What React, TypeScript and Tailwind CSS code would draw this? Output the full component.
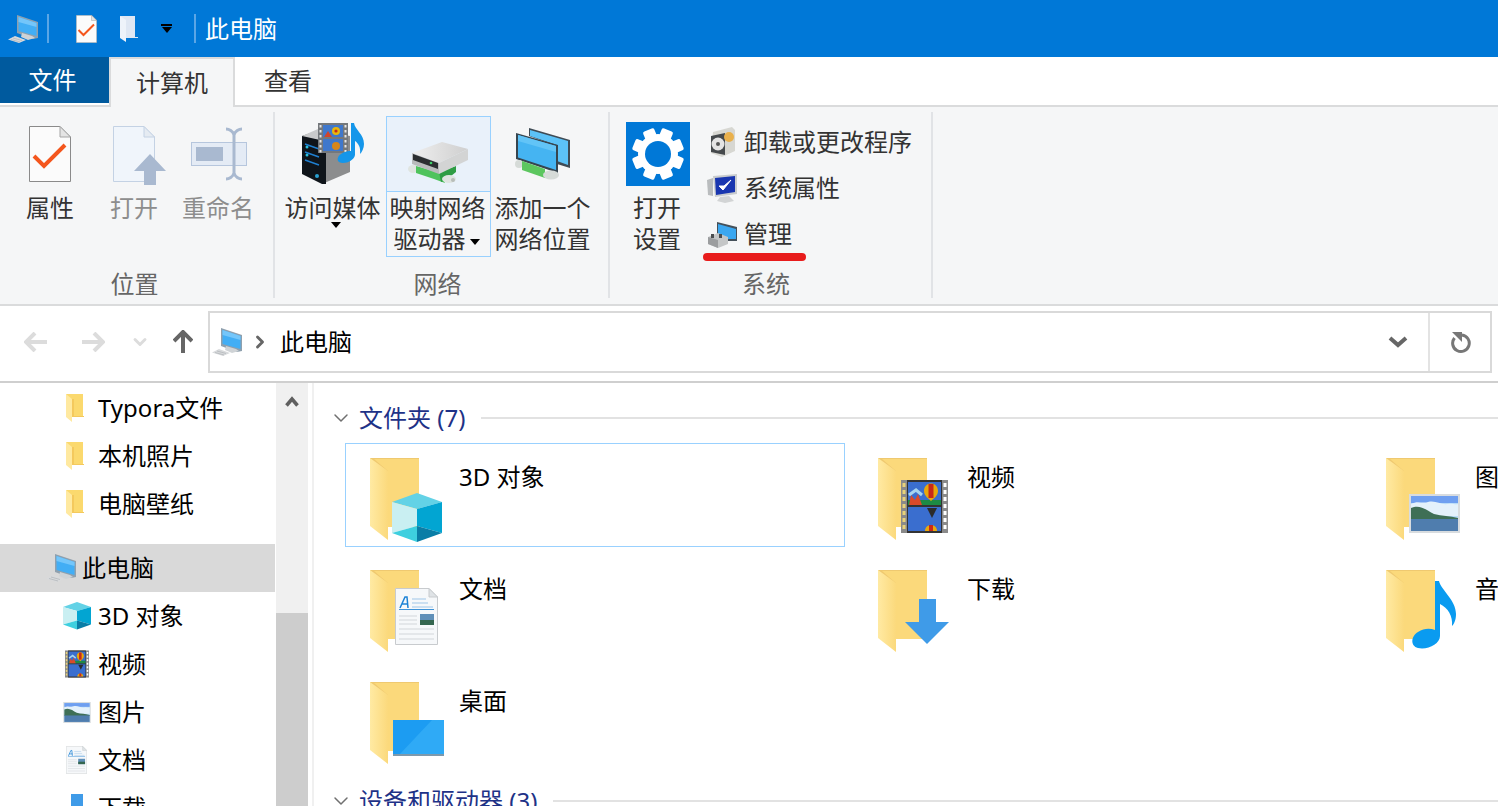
import type { ReactNode } from 'react';
import { ChevronDown, ChevronRight } from 'lucide-react';

// --- Icons ---

function PcIcon({ className }: { className?: string }) {
  return (
    <svg viewBox="0 0 30 28" className={className}>
      <path d="M9 0 L30 7 V23 L25 24 L9 18 Z" fill="#8fa0ae" />
      <path d="M10.5 2 L28.5 8 V21 L10.5 16 Z" fill="#42aef5" />
      <path d="M10.5 2 L28.5 8 V12 L10.5 7 Z" fill="#74c6fa" />
      <path d="M14 18 L24 21 L27 23 L20 25 L13 22 Z" fill="#cfd3d6" />
      <path d="M7 21 L18 25 L11 28 L0 24.5 Z" fill="#d8dadc" />
      <path d="M5 23 L14 25.5 M3 24.5 L12 27" stroke="#b4b8bb" strokeWidth="0.8" />
    </svg>
  );
}

function TinyFolder({ className }: { className?: string }) {
  return (
    <svg viewBox="0 0 18 28" className={className}>
      <path d="M0 0 H17 V23 H6 Z" fill="#fbd96e" />
      <path d="M0 0 L6 5 V28 L0 23 Z" fill="#ffe9a0" />
      <path d="M6 5 V23 H18 V22 H8 V5 Z" fill="#f4c95d" />
    </svg>
  );
}

function DocCheck({ className }: { className?: string }) {
  return (
    <svg viewBox="0 0 42 56" className={className}>
      <path d="M.5 .5 H31 L41.5 11 V55.5 H.5 Z" fill="#fbfbfb" stroke="#8a8a8a" />
      <path d="M31 .5 V11 H41.5 Z" fill="#e4e4e4" stroke="#a5a5a5" />
      <path d="M5 30 L15 40 L36 19" fill="none" stroke="#f4561d" strokeWidth="4" />
    </svg>
  );
}

function OpenIcon({ className }: { className?: string }) {
  return (
    <svg viewBox="0 0 54 59" className={className}>
      <path d="M.5 .5 H31 L41.5 11 V55.5 H.5 Z" fill="#f0f5fb" stroke="#c4d2e4" />
      <path d="M31 .5 V11 H41.5 Z" fill="#e5ebf2" stroke="#c4d2e4" />
      <path d="M37 28 L53 45 H43 V59 H31 V45 H21 Z" fill="#a9b9d0" />
    </svg>
  );
}

function RenameIcon({ className }: { className?: string }) {
  return (
    <svg viewBox="0 0 56 54" className={className}>
      <rect x=".5" y="15.5" width="55" height="23" fill="#e4ebf5" stroke="#b6c6dd" />
      <rect x="5" y="20" width="27" height="14" fill="#a9b9d0" />
      <path d="M35 2 C38 2 42 4 43 8 V46 C42 50 38 52 35 52 M51 2 C48 2 44 4 43 8 M51 52 C48 52 44 50 43 46" fill="none" stroke="#a9b9d0" strokeWidth="3" />
    </svg>
  );
}

function MediaIcon({ className }: { className?: string }) {
  return (
    <svg viewBox="0 0 62 62" className={className}>
      <path d="M18 8 L48 14 V50 L20 62 Z" fill="#8c8d8e" />
      <path d="M0 14 L18 8 L24 16 V62 L20 62 L0 52 Z" fill="#0f141a" />
      <path d="M0 14 L16 7 L18 18 Z" fill="#c9cacb" />
      <path d="M3 22 L17 27 M3 30 L17 35 M3 38 L17 43" stroke="#1f7fd0" strokeWidth="1.5" />
      <circle cx="5" cy="25" r="1.5" fill="#2ac0e0" />
      <circle cx="5" cy="33" r="1.5" fill="#2ac0e0" />
      <circle cx="15" cy="54" r="2" fill="#2aa0d0" />
      <rect x="16" y="1" width="30" height="30" fill="#74787c" />
      <rect x="21" y="3" width="20" height="12" fill="#3f78cc" />
      <rect x="21" y="17" width="20" height="12" fill="#3f78cc" />
      <circle cx="34" cy="9" r="4" fill="#e8b60c" />
      <circle cx="34" cy="9" r="1.6" fill="#c8281a" />
      <circle cx="34" cy="24" r="4" fill="#d8861a" />
      <path d="M22 15 L26 9 L30 15 Z" fill="#d2452a" />
      {[3, 8, 13, 18, 23, 28].map((y) => (
        <g key={y}>
          <rect x="17.5" y={y} width="2" height="2.5" fill="#e6e6e6" />
          <rect x="42.5" y={y} width="2" height="2.5" fill="#e6e6e6" />
        </g>
      ))}
      <path d="M49 1 L52 1 C53 8 62 12 62 22 C62 26 60 30 58 32 C59 25 56 21 53 19 V33 C52 39 42 43 37 40 C33 36 39 29 49 29 Z" fill="#1496ea" />
    </svg>
  );
}

function DriveIcon({ className }: { className?: string }) {
  return (
    <svg viewBox="0 0 60 42" className={className}>
      <defs>
        <linearGradient id="drvTop" x1="0" x2="1" y1="0" y2="0">
          <stop offset="0" stopColor="#efefef" />
          <stop offset="1" stopColor="#cfcfcf" />
        </linearGradient>
      </defs>
      <ellipse cx="5" cy="27" rx="5" ry="4" fill="#dfe4e0" />
      <path d="M8 24 L33 31 L37 41 L26 37 L8 31 Z" fill="#4fc35c" />
      <path d="M31 30 L48 24 V30 L38 38 L33 40 Z" fill="#2f9d45" />
      <ellipse cx="41" cy="37" rx="7" ry="4" fill="#dfe4e0" />
      <circle cx="45" cy="38" r="2" fill="#b8bdb9" />
      <path d="M4 11 L34 0 L60 7 L31 21 Z" fill="url(#drvTop)" />
      <path d="M4 11 L31 21 V32 L4 22 Z" fill="#b9babb" />
      <path d="M5 12 L30 21 V27 L5 18 Z" fill="#2b2e30" />
      <path d="M31 21 L60 7 V18 L31 32 Z" fill="#d3d4d4" />
      <circle cx="23" cy="21" r="1.3" fill="#3fd06a" />
    </svg>
  );
}

function NetIcon({ className }: { className?: string }) {
  return (
    <svg viewBox="0 0 55 52" className={className}>
      <path d="M14 0 L55 12 V40 L42 36 V18 L14 8 Z" fill="#3f4b55" />
      <path d="M15 2 L53 13 V37 L42 33 V17 L15 8 Z" fill="#5cc2f7" />
      <path d="M1 5 L43 17 V45 L1 31 Z" fill="#37454f" />
      <path d="M3 7 L41 18 V42 L3 29.5 Z" fill="#45b4f2" />
      <path d="M3 7 L41 18 V24 L3 13 Z" fill="#62c4f7" />
      <ellipse cx="4" cy="36" rx="4" ry="4" fill="#d6dbd8" />
      <path d="M7 33 L30 41 V50 L7 42 Z" fill="#5cc65f" />
      <ellipse cx="36" cy="47" rx="8" ry="4.5" fill="#d6dbd8" />
    </svg>
  );
}

function GearTile() {
  return (
    <div className="w-[64px] h-[64px] bg-[#0078d7] flex items-center justify-center">
      <svg viewBox="0 0 64 64" className="w-[64px] h-[64px]">
        <g fill="#ffffff">
          <circle cx="32" cy="32" r="20" />
          {[0, 45, 90, 135, 180, 225, 270, 315].map((a) => (
            <rect key={a} x="26" y="6" width="12" height="14" rx="2" transform={`rotate(${a + 22.5} 32 32)`} />
          ))}
        </g>
        <circle cx="32" cy="32" r="13" fill="#0078d7" />
      </svg>
    </div>
  );
}

function UninstallIcon({ className }: { className?: string }) {
  return (
    <svg viewBox="0 0 28 30" className={className}>
      <path d="M5 5 L24 0 L27 3 V24 L14 30 L3 26 Z" fill="#d7d7d2" />
      <path d="M3 9 L17 6 V28 L3 25 Z" fill="#45494c" />
      <circle cx="10" cy="17" r="6.5" fill="#e4e4e4" />
      <circle cx="10" cy="17" r="2" fill="#555" />
      <circle cx="21" cy="10" r="5" fill="#e9b04c" />
    </svg>
  );
}

function SysPropsIcon({ className }: { className?: string }) {
  return (
    <svg viewBox="0 0 30 29" className={className}>
      <path d="M0 6 L6 4 V22 L1 21 Z" fill="#b9bcbe" />
      <path d="M6 2 L30 0 V20 L8 23 Z" fill="#c9ccce" />
      <path d="M8 4 L28 2 V18 L9 21 Z" fill="#1936b0" />
      <path d="M12 12 L16 16 L24 6 L17 12 Z" fill="#ffffff" stroke="#ffffff" />
      <path d="M13 23 L22 22 L27 27 L18 29 L10 27 Z" fill="#d2d4d5" />
    </svg>
  );
}

function ManageIcon({ className }: { className?: string }) {
  return (
    <svg viewBox="0 0 29 27" className={className}>
      <path d="M9 1 L29 6 V20 L9 20 Z" fill="#45505a" />
      <path d="M10 3 L28 8 V18 L10 18 Z" fill="#3ba7f0" />
      <path d="M0 16 L10 12 L20 16 V23 L10 27 L0 23 Z" fill="#c4c6c7" />
      <path d="M0 16 L10 19 V27 L0 23 Z" fill="#9b9d9f" />
      <rect x="3" y="13" width="3" height="4" fill="#4b4d4f" />
      <rect x="11" y="13" width="3" height="4" fill="#4b4d4f" />
    </svg>
  );
}

// Big folder with a little picture on top of it, 90x90 box
function FolderIcon({ children }: { children?: ReactNode }) {
  return (
    <svg viewBox="0 0 90 90" className="w-[90px] h-[90px] shrink-0 mt-[14px]">
      <defs>
        <linearGradient id="flap" x1="0" x2="1" y1="0" y2="0">
          <stop offset="0" stopColor="#ffeaa3" />
          <stop offset="1" stopColor="#fbd97c" />
        </linearGradient>
      </defs>
      <path d="M0 0 H49 V69 H18 Z" fill="#fbd97b" />
      <path d="M0 0 H49 V1 H4 L18 13 V69 H16 Z" fill="#efc970" />
      <path d="M0 0 L18 13 V82 L0 68 Z" fill="url(#flap)" />
      {children}
    </svg>
  );
}

function Cube() {
  return (
    <g>
      <path d="M47 35 L72 44 L47 51 L22 44 Z" fill="#63d2e6" />
      <path d="M22 44 L47 51 V68 L22 75 Z" fill="#c9eff2" />
      <path d="M47 51 L72 44 V75 L47 68 Z" fill="#02a5d2" />
      <path d="M22 75 L47 68 V84 Z" fill="#3ecfdf" />
      <path d="M47 68 L72 75 L47 84 Z" fill="#0a7da6" />
    </g>
  );
}

function Balloon({ cx, cy }: { cx: number; cy: number }) {
  return (
    <g>
      <path d={`M${cx - 7} ${cy} C${cx - 7} ${cy - 10} ${cx + 7} ${cy - 10} ${cx + 7} ${cy} C${cx + 7} ${cy + 5} ${cx + 2} ${cy + 8} ${cx} ${cy + 10} C${cx - 2} ${cy + 8} ${cx - 7} ${cy + 5} ${cx - 7} ${cy} Z`} fill="#e8a80c" />
      <path d={`M${cx - 2.5} ${cy - 7} H${cx + 2.5} V${cy + 7} H${cx - 2.5} Z`} fill="#c8281a" />
    </g>
  );
}

function Filmstrip() {
  return (
    <g>
      <rect x="23" y="22" width="47" height="53" fill="#8a8a8a" />
      <rect x="29" y="22" width="35" height="53" fill="#333" />
      <rect x="30" y="24" width="33" height="23" fill="#3a6ecf" />
      <rect x="30" y="49" width="33" height="24" fill="#3a6ecf" />
      <rect x="30" y="42" width="33" height="5" fill="#1d8a44" />
      <path d="M31 47 L33 37 L37 42 L40 36 L44 47 Z" fill="#d94a2a" />
      <path d="M31 37 L38 32 L44 37" fill="none" stroke="#a6d4ef" strokeWidth="3" />
      <Balloon cx={53} cy={33} />
      <path d="M49 50 H59 L54 60 Z" fill="#2b2b2b" />
      <path d="M47 73 C47 65 59 65 59 73 Z" fill="#e8a80c" />
      <path d="M51 73 V67 H55 V73 Z" fill="#c8281a" />
      {[25, 32, 39, 46, 53, 60, 67].map((y) => (
        <g key={y}>
          <rect x="24.5" y={y} width="3" height="4" fill="#e8d27a" />
          <rect x="65.5" y={y} width="3" height="4" fill="#ffffff" />
        </g>
      ))}
    </g>
  );
}

function Photo() {
  return (
    <g>
      <rect x="23" y="36" width="51" height="39" fill="#d8dcdf" />
      <rect x="25" y="38" width="47" height="35" fill="#b9dcf8" />
      <rect x="25" y="38" width="47" height="7" fill="#6f9ff0" />
      <path d="M25 46 C32 42 36 46 42 44 C50 42 54 47 62 46 C66 45 70 47 72 46 V58 H25 Z" fill="#e4f1fb" />
      <path d="M25 50 C34 46 40 52 48 56 C56 58 64 58 72 60 V62 H25 Z" fill="#3f6f56" />
      <rect x="25" y="61" width="47" height="12" fill="#4f7dae" />
    </g>
  );
}

function DocPic() {
  return (
    <g>
      <path d="M25.5 18.5 H59 L67.5 27 V74.5 H25.5 Z" fill="#f6f8fa" stroke="#c8cbce" />
      <path d="M59 18.5 V27 H67.5 Z" fill="#dfe3e6" stroke="#c8cbce" />
      <path d="M30 38 L35 27 H37 L38 38 M32 34 H38" fill="none" stroke="#1c82d6" strokeWidth="1.5" />
      <path d="M42 29 H56 M42 33 H58 M42 37 H63" stroke="#9fc6e8" strokeWidth="1" />
      <rect x="29" y="39" width="35" height="1" fill="#3f93d8" />
      <path d="M29 46 H47 M29 50 H47 M29 54 H47 M29 59 H64 M29 64 H64 M29 69 H64" stroke="#d2d6da" strokeWidth="1" />
      <rect x="50" y="44" width="14" height="11" fill="#5f8fb8" />
      <rect x="50" y="50" width="14" height="5" fill="#34664f" />
    </g>
  );
}

function DesktopPic() {
  return (
    <g>
      <rect x="23" y="38" width="51" height="36" fill="#1c9cf2" />
      <path d="M30 72 L62 38 H74 V72 Z" fill="#2faaf6" />
      <rect x="23" y="72" width="51" height="2" fill="#7d99ac" />
    </g>
  );
}

function ArrowPic() {
  return <path d="M41 29 H58 V52 H71 L49 74 L27 52 H41 Z" fill="#3f9be8" />;
}

function NotePic() {
  return (
    <path
      d="M49 11 L53 11 C55 20 70 30 70 44 C70 50 68 54 66 56 C67 46 62 38 54 34 V66 C54 74 42 80 32 78 C24 76 25 66 32 62 C38 58 44 58 49 60 Z"
      fill="#0a9bf0"
    />
  );
}

// Thin arrows in the navigation row
function NavArrow({ dir, color }: { dir: 'left' | 'right' | 'up'; color: string }) {
  const rot = dir === 'left' ? 'rotate-0' : dir === 'right' ? 'rotate-180' : 'rotate-90';
  return (
    <svg viewBox="0 0 24 20" className={`w-[24px] h-[20px] ${rot}`}>
      <path d="M11 1 L2 10 L11 19 M2 10 H23" fill="none" stroke={color} strokeWidth="4" />
    </svg>
  );
}

// --- Ribbon pieces ---

function BigButton({ icon, label, w, disabled }: { icon: ReactNode; label: ReactNode; w: string; disabled?: boolean }) {
  return (
    <div className={`${w} flex flex-col items-center shrink-0`}>
      <div className="h-[76px] w-full flex flex-col items-center">{icon}</div>
      <div className={`leading-[31px] text-center whitespace-nowrap ${disabled ? 'text-[#8d8d8d]' : 'text-[#333333]'}`}>{label}</div>
    </div>
  );
}

function Caret() {
  return <span className="inline-block w-0 h-0 border-x-[5px] border-x-transparent border-t-[6px] border-t-black align-middle" />;
}

function SmallRow({ icon, label }: { icon: ReactNode; label: string }) {
  return (
    <div className="h-[46px] flex items-center">
      <div className="w-[36px] shrink-0">{icon}</div>
      <span className="text-[#333333] whitespace-nowrap">{label}</span>
    </div>
  );
}

function Group({ label, className, labelClass, children }: { label: string; className: string; labelClass: string; children: ReactNode }) {
  return (
    <div className={`relative h-[186px] flex flex-col border-r-2 border-[#e1e3e6] shrink-0 ${className}`}>
      <div className="flex-1 flex items-start">{children}</div>
      <div className={`text-center text-[#666666] leading-[32px] -mb-[2px] ${labelClass}`}>{label}</div>
    </div>
  );
}

function Ribbon() {
  return (
    <div className="h-[199px] bg-[#f5f6f7] border-b-2 border-[#dadbdc] pt-[5px] flex shrink-0">
      <Group label="位置" className="w-[275px] pl-[8px]" labelClass="pr-[12px]">
        <div className="flex pt-[4px]">
          <BigButton w="w-[84px]" icon={<DocCheck className="w-[42px] h-[56px] mt-[10px]" />} label="属性" />
          <BigButton w="w-[84px]" disabled icon={<OpenIcon className="w-[54px] h-[59px] mt-[10px] ml-[12px]" />} label="打开" />
          <BigButton w="w-[84px]" disabled icon={<RenameIcon className="w-[56px] h-[54px] mt-[11px] ml-[2px]" />} label="重命名" />
        </div>
      </Group>
      <Group label="网络" className="w-[335px] pl-[9px]" labelClass="pr-[17px]">
        <div className="flex pt-[4px]">
          <BigButton
            w="w-[97px]"
            icon={<MediaIcon className="w-[62px] h-[62px] mt-[6px] ml-[1px]" />}
            label={<div>访问媒体<div className="-mt-[5px] leading-[8px] pl-[6px]"><Caret /></div></div>}
          />
          <div className="w-[105px] h-[141px] ml-[5px] border border-[#99d1ff] bg-[#e9f1fa] shrink-0 flex flex-col">
            <div className="h-[74px] flex flex-col items-center">
              <DriveIcon className="w-[60px] h-[42px] mt-[25px] -ml-[2px]" />
            </div>
            <div className="flex-1 border-t border-[#99d1ff] bg-[#f5f6f7] text-[#333333] text-center leading-[31px] whitespace-nowrap">
              <div className="-ml-[2px]">映射网络</div>
              <div className="-ml-[2px] pr-[2px]">驱动器<span className="ml-[4px]"><Caret /></span></div>
            </div>
          </div>
          <div className="ml-[3px]">
            <BigButton w="w-[97px]" icon={<NetIcon className="w-[55px] h-[52px] mt-[12px]" />} label={<>添加一个<br />网络位置</>} />
          </div>
        </div>
      </Group>
      <Group label="系统" className="w-[323px] pl-[16px]" labelClass="pr-[25px]">
        <div className="flex pt-[10px]">
          <div className="w-[64px] flex flex-col items-center shrink-0">
            <GearTile />
            <div className="mt-[6px] pr-[2px] leading-[31px] text-center text-[#333333]">打开<br />设置</div>
          </div>
          <div className="ml-[18px] -mt-[3px]">
            <SmallRow icon={<UninstallIcon className="w-[28px] h-[30px]" />} label="卸载或更改程序" />
            <SmallRow icon={<SysPropsIcon className="w-[30px] h-[29px] -ml-[1px]" />} label="系统属性" />
            <SmallRow icon={<ManageIcon className="w-[29px] h-[27px]" />} label="管理" />
          </div>
        </div>
        <div className="absolute left-[93px] top-[141px] w-[103px] h-[8px] rounded-full bg-[#e81c1c]" />
      </Group>
    </div>
  );
}

// --- Navigation pane ---

function NavRow({ icon, label, selected, indent = 'pl-[66px]', gap = 'w-[32px]' }: { icon: ReactNode; label: string; selected?: boolean; indent?: string; gap?: string }) {
  return (
    <div className={`h-[48px] flex items-center text-black ${indent} ${selected ? 'bg-[#d9d9d9] w-[275px]' : ''}`}>
      <div className={`${gap} shrink-0 flex`}>{icon}</div>
      <span className="whitespace-nowrap">{label}</span>
    </div>
  );
}

function Sidebar() {
  return (
    <div className="w-[276px] shrink-0 pt-[1px] overflow-hidden">
      <NavRow icon={<TinyFolder className="w-[18px] h-[28px]" />} label="Typora文件" />
      <NavRow icon={<TinyFolder className="w-[18px] h-[28px]" />} label="本机照片" />
      <NavRow icon={<TinyFolder className="w-[18px] h-[28px]" />} label="电脑壁纸" />
      <div className="h-[16px]" />
      <NavRow selected indent="pl-[46px]" gap="w-[36px]" icon={<PcIcon className="w-[30px] h-[28px]" />} label="此电脑" />
      <NavRow indent="pl-[63px]" gap="w-[35px]" icon={<svg viewBox="0 0 50 50" className="w-[28px] h-[28px]"><g transform="translate(-22 -35)"><Cube /></g></svg>} label="3D 对象" />
      <NavRow indent="pl-[65px]" gap="w-[33px]" icon={<svg viewBox="23 22 47 53" className="w-[24px] h-[28px]"><Filmstrip /></svg>} label="视频" />
      <NavRow indent="pl-[63px]" gap="w-[35px]" icon={<svg viewBox="23 36 51 39" className="w-[28px] h-[21px]"><Photo /></svg>} label="图片" />
      <NavRow indent="pl-[66px]" gap="w-[32px]" icon={<svg viewBox="25 18 43 57" className="w-[21px] h-[28px]"><DocPic /></svg>} label="文档" />
      <NavRow indent="pl-[71px]" gap="w-[27px]" icon={<div className="w-[12px] h-[28px] bg-[#3f9be8]" />} label="下载" />
    </div>
  );
}

function Scrollbar() {
  return (
    <div className="w-[32px] shrink-0 bg-[#f0f0f0] flex flex-col">
      <div className="h-[230px] flex justify-center pt-[13px]">
        <svg viewBox="0 0 14 11" className="w-[14px] h-[11px]">
          <path d="M1.5 9.5 L7 3 L12.5 9.5" fill="none" stroke="#5f5f5f" strokeWidth="3.5" />
        </svg>
      </div>
      <div className="flex-1 bg-[#cdcdcd]" />
    </div>
  );
}

// --- Content ---

function Tile({ label, icon, active }: { label: string; icon: ReactNode; active?: boolean }) {
  return (
    <div className={`w-[500px] h-[104px] flex pl-[24px] border ${active ? 'border-[#99d1ff]' : 'border-transparent'}`}>
      {icon}
      <span className="-ml-[1px] mt-[17px] leading-[32px] text-black whitespace-nowrap">{label}</span>
    </div>
  );
}

function SectionHead({ label, lineGap }: { label: string; lineGap: string }) {
  return (
    <div className="h-[32px] flex items-center">
      <ChevronDown className="w-[24px] h-[24px] text-[#707070] shrink-0" strokeWidth={1.5} />
      <span className="ml-[6px] text-[#1e3287] whitespace-nowrap">{label}</span>
      <div className={`flex-1 h-[2px] bg-[#e2e2e2] ${lineGap}`} />
    </div>
  );
}

function Content() {
  return (
    <div className="flex-1 min-w-0 pl-[15px] pt-[19px] overflow-hidden border-l-2 border-[#f0f0f0] ml-[4px]">
      <SectionHead label="文件夹 (7)" lineGap="ml-[16px]" />
      <div className="grid grid-cols-[500px_500px_500px] gap-x-[8px] gap-y-[8px] pl-[16px] mt-[9px]">
        <Tile active label="3D 对象" icon={<FolderIcon><Cube /></FolderIcon>} />
        <Tile label="视频" icon={<FolderIcon><Filmstrip /></FolderIcon>} />
        <Tile label="图片" icon={<FolderIcon><Photo /></FolderIcon>} />
        <Tile label="文档" icon={<FolderIcon><DocPic /></FolderIcon>} />
        <Tile label="下载" icon={<FolderIcon><ArrowPic /></FolderIcon>} />
        <Tile label="音乐" icon={<FolderIcon><NotePic /></FolderIcon>} />
        <Tile label="桌面" icon={<FolderIcon><DesktopPic /></FolderIcon>} />
      </div>
      <div className="mt-[14px]">
        <SectionHead label="设备和驱动器 (3)" lineGap="ml-[16px]" />
      </div>
    </div>
  );
}

export default function App() {
  return (
    <div className="w-[1498px] h-[806px] overflow-hidden flex flex-col bg-white text-[24px] font-['Noto_Sans','Noto_Sans_CJK_SC',sans-serif]">
      {/* Title bar */}
      <div className="h-[57px] bg-[#0078d7] flex items-center shrink-0 pl-[8px]">
        <PcIcon className="w-[30px] h-[28px]" />
        <div className="ml-[9px] w-[2px] h-[29px] bg-[#5ba6e6]" />
        <DocCheck className="ml-[27px] w-[21px] h-[28px]" />
        <svg viewBox="0 0 18 27" className="ml-[23px] w-[18px] h-[27px]">
          <path d="M0 1 H15 V22 H18 V23 H5 Z" fill="#dfe7f3" />
          <path d="M0 1 L6 5 V27 L0 23 Z" fill="#eef3fa" />
        </svg>
        <div className="ml-[23px] flex flex-col items-center">
          <div className="w-[11px] h-[2px] bg-black mb-[1px]" />
          <Caret />
        </div>
        <div className="ml-[22px] w-[2px] h-[29px] bg-[#5ba6e6]" />
        <span className="ml-[9px] text-white">此电脑</span>
      </div>

      {/* Tabs */}
      <div className="h-[50px] flex shrink-0 bg-white border-b-2 border-[#dadbdc] relative">
        <div className="w-[109px] h-[46px] bg-[#005a9e] text-white flex items-center justify-center pr-[4px]">文件</div>
        <div className="w-[126px] h-[50px] bg-[#f5f6f7] border-x-2 border-t-2 border-[#dadbdc] text-[#333333] flex items-center justify-center">计算机</div>
        <div className="w-[106px] flex items-center justify-center text-[#333333]">查看</div>
      </div>

      <Ribbon />

      {/* Address row */}
      <div className="h-[77px] flex items-center shrink-0 border-b-2 border-[#cfcfcf] pl-[24px] pb-[3px]">
        <NavArrow dir="left" color="#dcdcdc" />
        <div className="ml-[33px]"><NavArrow dir="right" color="#dcdcdc" /></div>
        <ChevronDown className="ml-[25px] w-[20px] h-[20px] text-[#dcdcdc]" strokeWidth={3.5} />
        <div className="ml-[21px] w-[24px] flex justify-center"><NavArrow dir="up" color="#666666" /></div>
        <div className="ml-[13px] mr-[6px] flex-1 h-[62px] border-2 border-[#d9d9d9] flex items-center text-black">
          <PcIcon className="ml-[2px] w-[30px] h-[28px]" />
          <ChevronRight className="ml-[8px] w-[20px] h-[20px] text-[#666666]" strokeWidth={3.5} />
          <span className="ml-[10px]">此电脑</span>
          <div className="flex-1" />
          <svg viewBox="0 0 20 12" className="w-[20px] h-[12px]">
            <path d="M2 2 L10 9 L18 2" fill="none" stroke="#666666" strokeWidth="4" />
          </svg>
          <div className="ml-[20px] w-[2px] h-full bg-[#e3e3e3]" />
          <svg viewBox="0 0 24 24" className="ml-[19px] mr-[17px] w-[24px] h-[24px]">
            <path d="M13 5 A8.3 8.3 0 1 1 5.5 8" fill="none" stroke="#777777" strokeWidth="3" />
            <path d="M3 2 H13 V12 Z" fill="#777777" />
          </svg>
        </div>
      </div>

      {/* Body */}
      <div className="flex-1 min-h-0 flex">
        <Sidebar />
        <Scrollbar />
        <Content />
      </div>
    </div>
  );
}
